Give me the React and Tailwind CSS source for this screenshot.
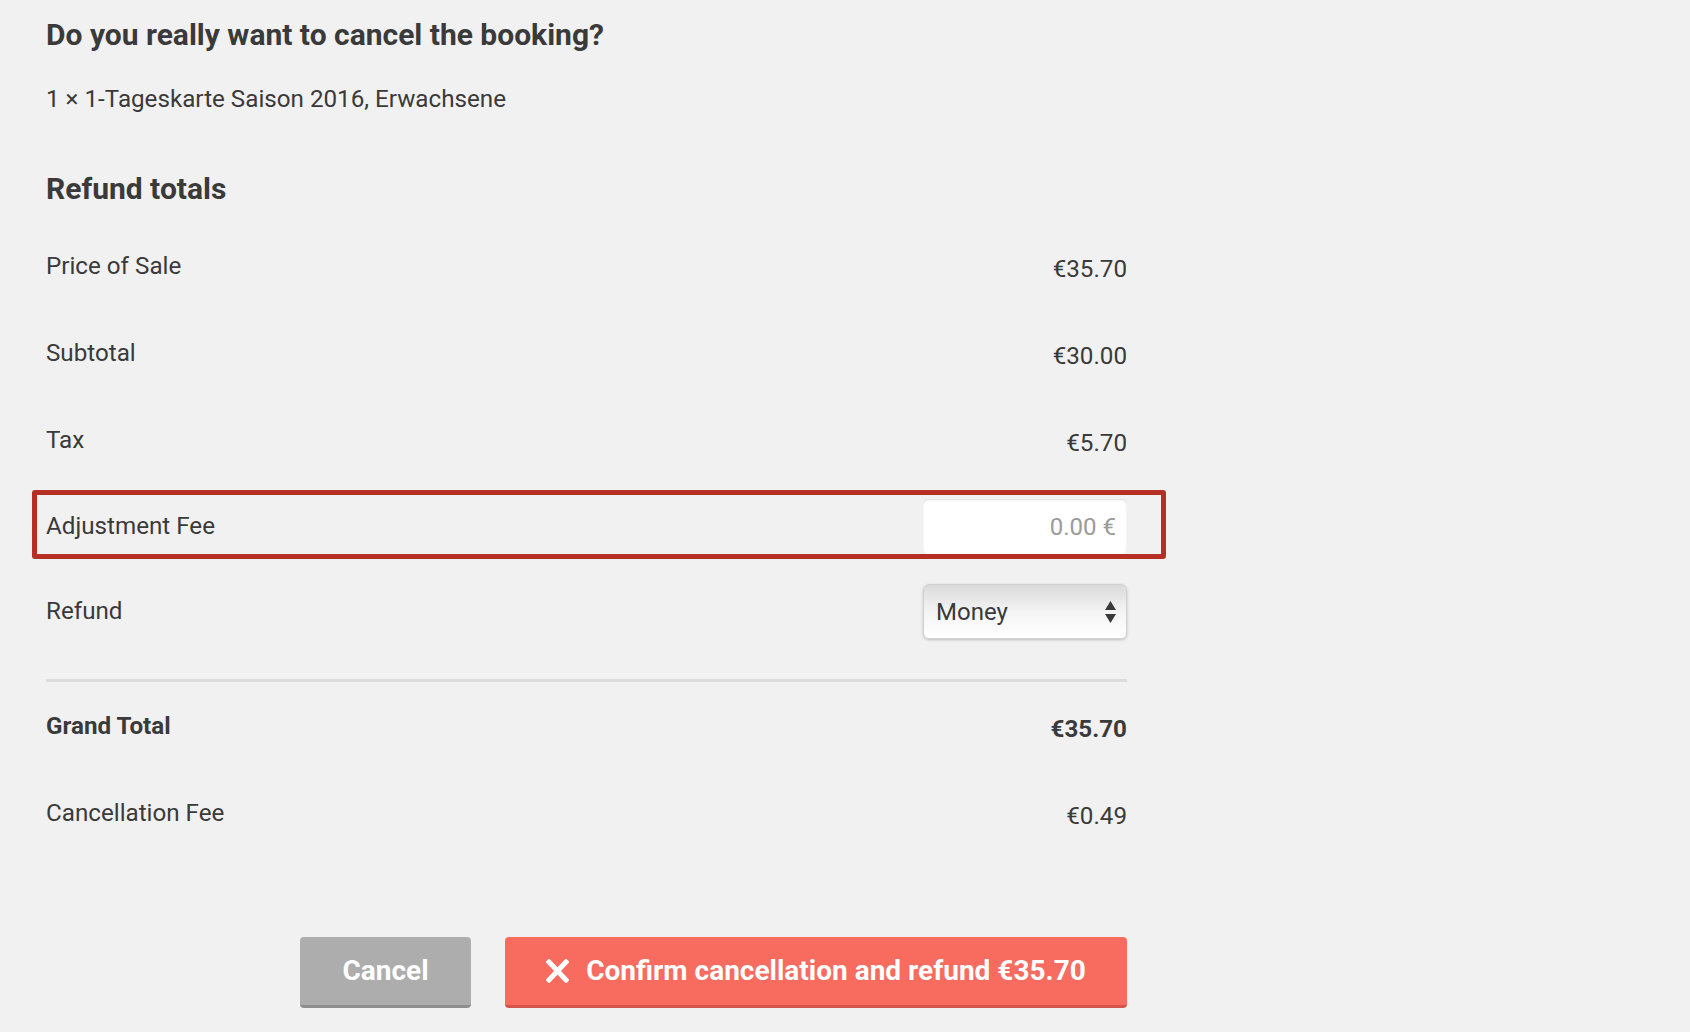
import { useState } from 'react';

const rows = [
  { label: 'Price of Sale', value: '€35.70' },
  { label: 'Subtotal', value: '€30.00' },
  { label: 'Tax', value: '€5.70' },
];

function Row({ label, children, bold, tall }) {
  return (
    <div className={`relative flex items-center justify-between ${tall ? 'h-[87px]' : 'h-[85px]'}`}>
      <span className={bold ? 'font-bold' : ''}>{label}</span>
      {children}
    </div>
  );
}

export default function App() {
  const [fee, setFee] = useState('');
  const [refund, setRefund] = useState('money');

  return (
    <div className="min-h-screen w-full bg-[#f1f1f1] font-['Roboto',sans-serif] text-[#3a3a3a]">
      <div className="w-[1127px] pl-[46px] pt-[16px]">
        <h1 className="text-[30px] font-bold leading-[38px]">Do you really want to cancel the booking?</h1>
        <p className="mt-[30px] text-[24.2px] leading-[30px]">1 × 1-Tageskarte Saison 2016, Erwachsene</p>

        <h2 className="mt-[56px] text-[30px] font-bold leading-[38px]">Refund totals</h2>

        <div className="mt-[15px] text-[24.2px]">
          {rows.map((r) => (
            <Row key={r.label} label={r.label} tall>
              <span className="mt-[6px]">{r.value}</span>
            </Row>
          ))}

          <Row label="Adjustment Fee">
            {/* highlight frame */}
            <div className="pointer-events-none absolute -left-[14px] -right-[39px] top-[6px] h-[69px] rounded-[3px] border-[5px] border-[#b62f24]" />
            <input
              value={fee}
              onChange={(e) => setFee(e.target.value)}
              placeholder="0.00 €"
              className="h-[55px] w-[204px] rounded-[5px] bg-white pr-[11px] text-right text-[24px] text-[#3a3a3a] shadow-[inset_0_1px_2px_rgba(0,0,0,0.14)] outline-none placeholder:text-[#9b9b9b]"
            />
          </Row>

          <Row label="Refund">
            <div className="relative">
              <select
                value={refund}
                onChange={(e) => setRefund(e.target.value)}
                className="h-[55px] w-[204px] appearance-none rounded-[6px] border border-[#d2d2d2] bg-gradient-to-b from-[#dadada] via-[#f4f4f4] to-white pl-[12px] text-[24px] text-[#3a3a3a] shadow-[0_1px_3px_rgba(0,0,0,0.22)] outline-none"
              >
                <option value="money">Money</option>
                <option value="voucher">Voucher</option>
              </select>
              <svg className="pointer-events-none absolute right-[11px] top-[17px]" width="11" height="23" viewBox="0 0 11 23">
                <path d="M5.5 0 L11 9 L0 9 Z" fill="#3a3a3a" />
                <path d="M0 13 L11 13 L5.5 22 Z" fill="#3a3a3a" />
              </svg>
            </div>
          </Row>

          <div className="mt-[25px] h-[3px] bg-[#dcdcdc]" />

          <div className="mt-[1px] flex h-[87px] items-center justify-between">
            <span className="font-bold">Grand Total</span>
            <span className="mt-[6px] font-bold">€35.70</span>
          </div>
          <div className="flex h-[87px] items-center justify-between">
            <span>Cancellation Fee</span>
            <span className="mt-[6px]">€0.49</span>
          </div>
        </div>

        <div className="mt-[80px] flex justify-end gap-[34px]">
          <button className="h-[71px] w-[171px] rounded-[4px] border-b-[3px] border-[#8e8e8e] bg-[#adadad] text-[28px] font-bold text-white">
            Cancel
          </button>
          <button className="flex h-[71px] w-[622px] items-center justify-center gap-[17px] rounded-[4px] border-b-[3px] border-[#d4544b] bg-[#f86b5f] text-[28px] font-bold text-white">
            <svg width="23" height="24" viewBox="0 0 23 24">
              <path d="M3 3 L20 21 M20 3 L3 21" stroke="white" strokeWidth="5" strokeLinecap="square" />
            </svg>
            Confirm cancellation and refund €35.70
          </button>
        </div>
      </div>
    </div>
  );
}
